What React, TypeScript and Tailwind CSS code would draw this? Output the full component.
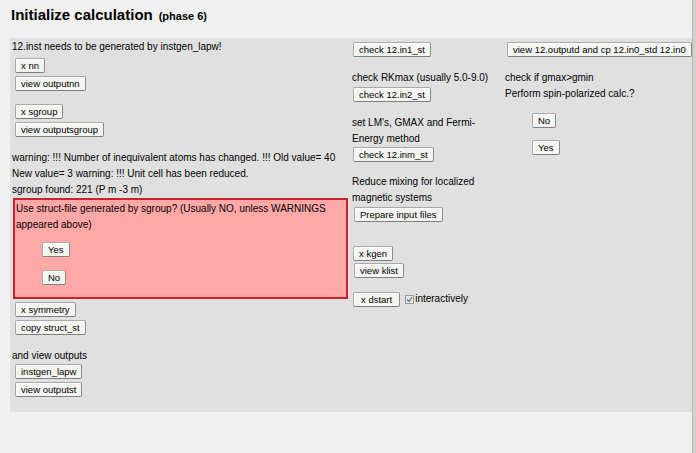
import React from "react";

function Btn({ children, className = "" }: { children: React.ReactNode; className?: string }) {
  return (
    <div
      className={
        "self-start inline-flex items-center h-[15px] px-[5px] text-[9.5px] leading-none text-black whitespace-nowrap bg-[#f4f4f1] border border-[#a8a8a8] border-r-[#8a8a8a] border-b-[#7e7e7e] rounded-[2px] shadow-[inset_1px_1px_0_#ffffff] " +
        className
      }
    >
      {children}
    </div>
  );
}

function Line({ children, className = "" }: { children: React.ReactNode; className?: string }) {
  return <div className={"h-[16px] leading-[16px] whitespace-nowrap " + className}>{children}</div>;
}

export default function App() {
  return (
    <div className="w-[696px] h-[453px] bg-[#f0f0f0] flex overflow-hidden text-black font-['Liberation_Sans',Arial,sans-serif] text-[10px]">
      <div className="flex-1 flex flex-col">
        <div className="h-[38px] pl-[11px] pt-[6px] flex items-baseline gap-[6px]">
          <span className="text-[15px] font-bold leading-[18px]">Initialize calculation</span>
          <span className="text-[11px] font-bold">(phase 6)</span>
        </div>
        <div className="ml-[10px] h-[374px] bg-[#e0e0e0] flex">
          {/* column 1 */}
          <div className="w-[340px] flex flex-col pl-[2px]">
            <Line className="mt-[1px]">12.inst needs to be generated by instgen_lapw!</Line>
            <Btn className="mt-[3px] ml-[3px]">x nn</Btn>
            <Btn className="mt-[3px] ml-[3px]">view outputnn</Btn>
            <Btn className="mt-[13px] ml-[3px]">x sgroup</Btn>
            <Btn className="mt-[3px] ml-[3px]">view outputsgroup</Btn>
            <Line className="mt-[13px]">warning: !!! Number of inequivalent atoms has changed. !!! Old value= 40</Line>
            <Line>New value= 3 warning: !!! Unit cell has been reduced.</Line>
            <Line>sgroup found: 221 (P m -3 m)</Line>
            <div className="ml-[1px] w-[335px] h-[101px] border-2 border-[#c8242a] bg-[#ffa8a8] flex flex-col">
              <Line className="mt-[1px] pl-[1px]">Use struct-file generated by sgroup? (Usually NO, unless WARNINGS</Line>
              <Line className="pl-[1px]">appeared above)</Line>
              <Btn className="mt-[9px] ml-[27px]">Yes</Btn>
              <Btn className="mt-[13px] ml-[27px]">No</Btn>
            </div>
            <Btn className="mt-[3px] ml-[3px]">x symmetry</Btn>
            <Btn className="mt-[3px] ml-[3px]">copy struct_st</Btn>
            <Line className="mt-[13px]">and view outputs</Line>
            <Btn className="ml-[3px]">instgen_lapw</Btn>
            <Btn className="mt-[3px] ml-[3px]">view outputst</Btn>
          </div>
          {/* column 2 */}
          <div className="w-[155px] flex flex-col pl-[2px]">
            <Btn className="mt-[4px] ml-[1px]">check 12.in1_st</Btn>
            <Line className="mt-[13px]">check RKmax (usually 5.0-9.0)</Line>
            <Btn className="mt-[1px] ml-[1px]">check 12.in2_st</Btn>
            <Line className="mt-[13px]">set LM's, GMAX and Fermi-</Line>
            <Line>Energy method</Line>
            <Btn className="ml-[1px]">check 12.inm_st</Btn>
            <Line className="mt-[12px]">Reduce mixing for localized</Line>
            <Line>magnetic systems</Line>
            <Btn className="mt-[1px] ml-[2px]">Prepare input files</Btn>
            <Btn className="mt-[24px] ml-[1px]">x kgen</Btn>
            <Btn className="mt-[2px] ml-[2px]">view klist</Btn>
            <div className="mt-[14px] flex items-start gap-[5px]">
              <Btn className="ml-[1px] px-[7px]">x dstart</Btn>
              <div className="flex items-center gap-[1px] mt-[1px]">
                <span className="w-[9px] h-[9px] border border-[#9a9a9a] bg-[#e8e8e8] flex items-center justify-center">
                  <svg width="7" height="7" viewBox="0 0 7 7">
                    <path d="M1 3.5 L3 5.5 L6 1" stroke="#6a7a8a" strokeWidth="1.2" fill="none" />
                  </svg>
                </span>
                <span className="leading-[12px]">interactively</span>
              </div>
            </div>
          </div>
          {/* column 3 */}
          <div className="flex-1 flex flex-col">
            <Btn className="mt-[4px] ml-[2px]">view 12.outputd and cp 12.in0_std 12.in0</Btn>
            <Line className="mt-[13px]">check if gmax&gt;gmin</Line>
            <Line>Perform spin-polarized calc.?</Line>
            <Btn className="mt-[11px] ml-[27px]">No</Btn>
            <Btn className="mt-[12px] ml-[27px]">Yes</Btn>
          </div>
        </div>
      </div>
      <div className="w-[6px] border-l border-[#bfb7af] bg-[#d8d0c8]" />
    </div>
  );
}
